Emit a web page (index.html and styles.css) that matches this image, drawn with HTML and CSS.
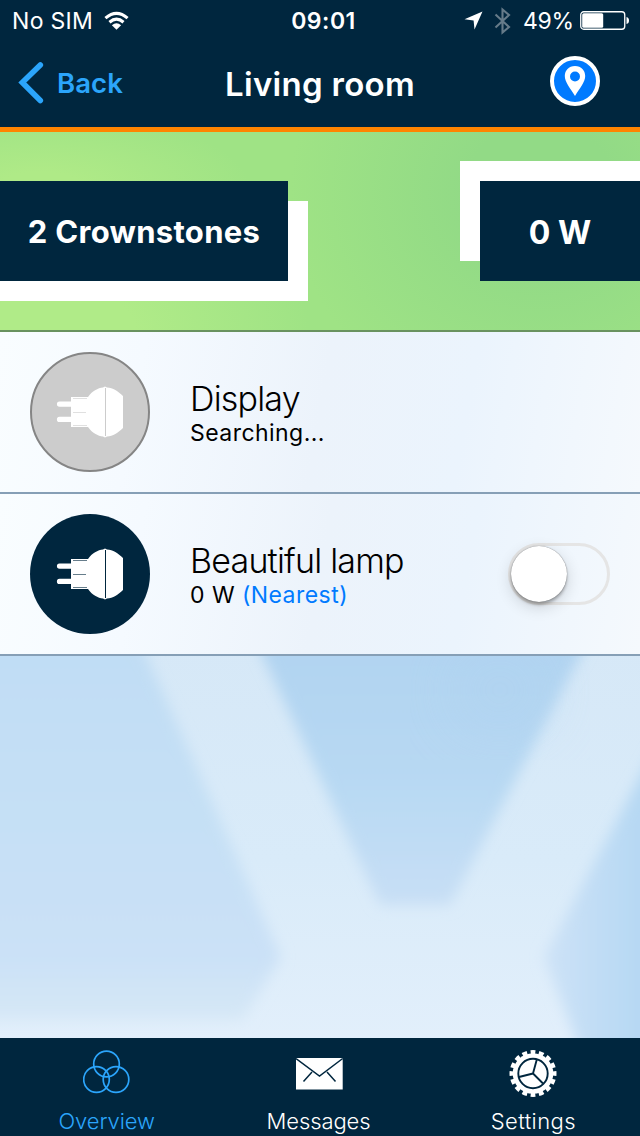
FILE: index.html
```html
<!DOCTYPE html>
<html lang="en">
<head>
<meta charset="utf-8">
<title>Living room</title>
<link rel="stylesheet" href="styles.css">
</head>
<body>
<svg class="backdrop" viewBox="0 0 640 1136" aria-hidden="true">
  <defs>
    <filter id="soft" x="-20%" y="-20%" width="140%" height="140%"><feGaussianBlur stdDeviation="7"/></filter>
    <filter id="haze" x="-50%" y="-50%" width="200%" height="200%"><feGaussianBlur stdDeviation="35"/></filter>
    <linearGradient id="left" x1="0" y1="610" x2="0" y2="1020" gradientUnits="userSpaceOnUse"><stop offset="0" stop-color="#bfdcf4"/><stop offset=".5" stop-color="#c5e0f5"/><stop offset=".85" stop-color="#cbe1f7"/><stop offset="1" stop-color="#d6e8f6"/></linearGradient>
    <linearGradient id="mid" x1="0" y1="0" x2="0" y2="1"><stop offset="0" stop-color="#afd2f0"/><stop offset=".6" stop-color="#b8d9f3"/><stop offset="1" stop-color="#c8dff5"/></linearGradient>
    <linearGradient id="base" x1="0" y1="640" x2="0" y2="1040" gradientUnits="userSpaceOnUse"><stop offset="0" stop-color="#d6e8f7"/><stop offset=".55" stop-color="#d9ebf9"/><stop offset="1" stop-color="#e2effb"/></linearGradient>
    <linearGradient id="side" x1="540" y1="0" x2="640" y2="0" gradientUnits="userSpaceOnUse"><stop offset="0" stop-color="#cfe3f7"/><stop offset="1" stop-color="#b6d8f3"/></linearGradient>
  </defs>
  <rect width="640" height="1136" fill="url(#base)"/>
  <g filter="url(#soft)">
    <path d="M-30 610H126L281 957L243 1020H-30Z" fill="url(#left)"/>
    <path d="M241 610L380 905H450L604 610Z" fill="url(#mid)"/>
    <path d="M740 590L544 957L584 1060H740Z" fill="url(#side)"/>
  </g>
  <ellipse cx="500" cy="690" rx="45" ry="35" fill="#aed1f0" opacity=".6" filter="url(#haze)"/>
</svg>
<div class="screen">
  <header class="top">
    <div class="status">
      <div class="status-side">
        <span class="carrier">No SIM</span>
        <svg class="wifi" width="25" height="20" viewBox="0 0 26 20"><g fill="none" stroke="#fff" stroke-width="3.200"><path d="M1.500 7Q13-2.800 24.500 7"/><path d="M5.700 11.300Q13 5 20.300 11.300"/></g><path d="M8.200 14.300Q13 10.300 17.800 14.300L13 19Z" fill="#fff"/></svg>
      </div>
      <time class="clock">09:01</time>
      <div class="status-side status-right">
        <svg width="19" height="19" viewBox="0 0 19 19"><path d="M18.500.5L10.500 18.500L9.600 9.400L.5 8.200Z" fill="#fff"/></svg>
        <svg class="bluetooth" width="17" height="28" viewBox="0 0 17 28"><path d="M1.500 7.500L15 20L8.500 25.500V2.500L15 8L1.500 20.500" fill="none" stroke="#667b89" stroke-width="2.1"/></svg>
        <span class="percent">49%</span>
        <svg class="battery" width="50" height="20" viewBox="0 0 50 20"><rect x=".75" y=".75" width="44" height="17.5" rx="3" fill="none" stroke="#fff" stroke-width="1.300"/><rect x="2.200" y="2.200" width="21" height="14.600" rx="1.5" fill="#fff"/><path d="M46.5 6Q49 6.5 49 9.5T46.5 13Z" fill="#fff"/></svg>
      </div>
    </div>
    <nav class="navbar">
      <div class="back">
        <svg width="26" height="42" viewBox="0 0 26 42"><path d="M22.300 3L4.300 20.500L22.300 38.500" fill="none" stroke="#2ba5fb" stroke-width="5.600" stroke-linecap="round" stroke-linejoin="miter"/></svg>
        <span class="back-label">Back</span>
      </div>
      <h1 class="title">Living room</h1>
      <svg class="pin" width="50" height="50" viewBox="0 0 50 50"><circle cx="25" cy="25" r="23" fill="#007aff" stroke="#fff" stroke-width="4"/><path fill="#fff" fill-rule="evenodd" d="M25 10C18.700 10 14.800 14.500 14.800 20C14.800 26 20 32 25 40C30 32 35.200 26 35.200 20C35.200 14.500 31.300 10 25 10ZM25 15.500A5 5 0 1 1 25 25.500A5 5 0 0 1 25 15.500Z"/></svg>
    </nav>
  </header>
  <section class="summary">
    <div class="tag tag-count"><span>2 Crownstones</span></div>
    <div class="tag tag-power"><span>0 W</span></div>
  </section>
  <main class="devices">
    <article class="device">
      <div class="icon icon-off">
        <svg width="68" height="52" viewBox="0 0 68 52"><use href="#plug"/></svg>
      </div>
      <div class="info"><h2 class="name">Display</h2><p class="state">Searching...</p></div>
    </article>
    <article class="device">
      <div class="icon">
        <svg width="68" height="52" viewBox="0 0 68 52"><g id="plug"><path fill="#fff" d="M3.500 15.500H15V11H32C36 5 42 2 47 1.500L49 .5L51 1.500C57 2 62 5 67 10V42C62 47 57 50 51 50.500L49 51.500L47 50.500C42 50 36 47 32 41H15V36H3.500A2.600 2.600 0 0 1 3.500 30.800H15V20.700H3.500A2.600 2.600 0 0 1 3.500 15.500Z"/><g fill="none" stroke="currentColor"><path d="M49.500 2V50" stroke-width="1"/><path d="M17 12.500H31M17 26.500H30M17 39.500H31" stroke-width="1" opacity=".6"/></g></g></svg>
      </div>
      <div class="info"><h2 class="name lamp">Beautiful lamp</h2><p class="state">0 W <span class="nearest">(Nearest)</span></p></div>
      <div class="switch"><div class="knob"></div></div>
    </article>
  </main>
  <footer class="tabs">
    <div class="tab tab-active">
      <svg width="48" height="48" viewBox="0 0 48 48"><g fill="none" stroke="#2ba5fb" stroke-width="1.700"><circle cx="23.500" cy="15" r="12.800"/><circle cx="13.500" cy="30.500" r="12.800"/><circle cx="33" cy="30.500" r="12.800"/></g></svg>
      <span class="l-overview">Overview</span>
    </div>
    <div class="tab">
      <svg width="48" height="48" viewBox="0 0 48 48"><path d="M0 9H46.700V40.500H0Z" fill="#fff"/><path d="M0 9.500L23.500 27L46.700 9.500M16 23L7.500 32.500M31 23L39.500 32.500" fill="none" stroke="#00263e" stroke-width="1.500"/></svg>
      <span class="l-messages">Messages</span>
    </div>
    <div class="tab">
      <svg width="48" height="48" viewBox="0 0 48 48"><circle cx="24" cy="24.500" r="20.300" fill="#fff"/><circle cx="24" cy="24.500" r="21.500" fill="none" stroke="#fff" stroke-width="4" pathLength="160" stroke-dasharray="5.800 4.200" stroke-dashoffset="2.900"/><g fill="none" stroke="#00263e" stroke-width="1.900"><circle cx="24" cy="24.500" r="14.700"/><path d="M24 24.500L27.800 10.500M24 24.500L10 28M24 24.500L34 34.500"/></g></svg>
      <span class="l-settings">Settings</span>
    </div>
  </footer>
</div>
</body>
</html>
```

FILE: styles.css
```css
* { box-sizing: border-box; margin: 0; padding: 0; }
body {
  width: 640px;
  height: 1136px;
  overflow: hidden;
  font-family: Inter, "Liberation Sans", sans-serif;
  color: #000;
}
svg { display: block; flex: none; }
.backdrop { position: absolute; top: 0; left: 0; width: 640px; height: 1136px; }
.screen { position: relative; display: flex; flex-direction: column; height: 1136px; overflow: hidden; white-space: nowrap; }

.top { height: 132px; background: #00263e; border-bottom: 5px solid #ff8400; color: #fff; }
.status { display: grid; grid-template-columns: 1fr auto 1fr; align-items: center; height: 41px; padding: 0 10px 0 12px; font-size: 23px; line-height: 28px; }
.status-side { display: flex; align-items: center; }
.status-right { justify-content: flex-end; }
.carrier { letter-spacing: .3px; padding-top: 1px; }
.wifi { margin-left: 11px; }
.clock { font-weight: 600; letter-spacing: .5px; padding: 1px 0 0 5px; }
.bluetooth { margin-left: 11px; }
.percent { margin: 0 6px 0 12px; padding-top: 1px; letter-spacing: -.2px; }

.navbar { display: grid; grid-template-columns: 200px 1fr 200px; align-items: center; height: 83px; }
.back { display: flex; align-items: center; padding-left: 18px; color: #2ba5fb; }
.back-label { font-size: 27.5px; font-weight: 600; margin-left: 13px; line-height: 34px; letter-spacing: .1px; }
.title { font-size: 33px; font-weight: 600; text-align: center; line-height: 40px; padding-top: 3px; letter-spacing: .3px; }
.pin { justify-self: end; margin: -4px 40px 0 0; }

.summary {
  height: 198px;
  display: flex;
  justify-content: space-between;
  align-items: flex-start;
  padding-top: 49px;
  background:
    radial-gradient(ellipse 250px 150px at 60px 200px, #b0eb88 30%, transparent),
    radial-gradient(ellipse 250px 230px at 540px 60px, #92da86 30%, transparent),
    radial-gradient(ellipse 210px 75px at 40px 55px, #afea87 20%, transparent),
    #9fe385;
}
.tag { display: flex; align-items: center; justify-content: center; height: 100px; background: #00263e; color: #fff; font-weight: 700; }
.tag-count { width: 288px; font-size: 31px; letter-spacing: .3px; box-shadow: 20px 20px 0 #fff, 0 20px 0 #fff; }
.tag-power { width: 160px; padding-top: 2px; font-size: 32px; box-shadow: -20px -20px 0 #fff, 0 -20px 0 #fff; }

.devices { border-top: 2px solid #69925f; }
.device {
  display: flex;
  align-items: center;
  height: 162px;
  padding: 0 30px;
  border-bottom: 2px solid #869fb6;
  background: linear-gradient(100deg, #f9fdff 0, #f5faff 22%, #ecf3fb 50%, #ebf4fd 72%, #f5f9fd 100%);
}
.icon { display: flex; align-items: center; justify-content: center; width: 120px; height: 120px; border-radius: 50%; background: #00263e; color: #00263e; }
.icon svg { margin-left: -1px; }
.icon-off { background: #ccc; border: 2px solid #858585; color: #ccc; }
.info { flex: 1; margin-left: 40px; padding-top: 2px; }
.name { font-size: 34px; font-weight: 300; line-height: 40px; letter-spacing: -.8px; }
.lamp { letter-spacing: -.8px; }
.state { font-size: 23px; line-height: 28px; letter-spacing: .45px; }
.nearest { color: #007aff; }
.switch { width: 102px; height: 62px; border: 3px solid #e5e5e5; border-radius: 31px; }
.knob { width: 56px; height: 56px; border-radius: 50%; background: #fff; box-shadow: 0 3px 3px rgba(0, 0, 0, .25), 0 5px 16px rgba(0, 0, 0, .16), 0 0 1px rgba(0, 0, 0, .6); }

.tabs { display: grid; grid-template-columns: repeat(3, 1fr); height: 98px; margin-top: auto; background: #00263e; color: #fff; }
.tab { display: flex; flex-direction: column; align-items: center; padding-top: 11px; font-size: 22px; font-weight: 300; line-height: 28px; }
.tab span { margin-top: 10px; }
.l-overview { letter-spacing: -.1px; }
.l-messages { letter-spacing: -.1px; margin-left: -3px; }
.l-settings { letter-spacing: .4px; }
.tab-active { color: #2ba5fb; }
```
